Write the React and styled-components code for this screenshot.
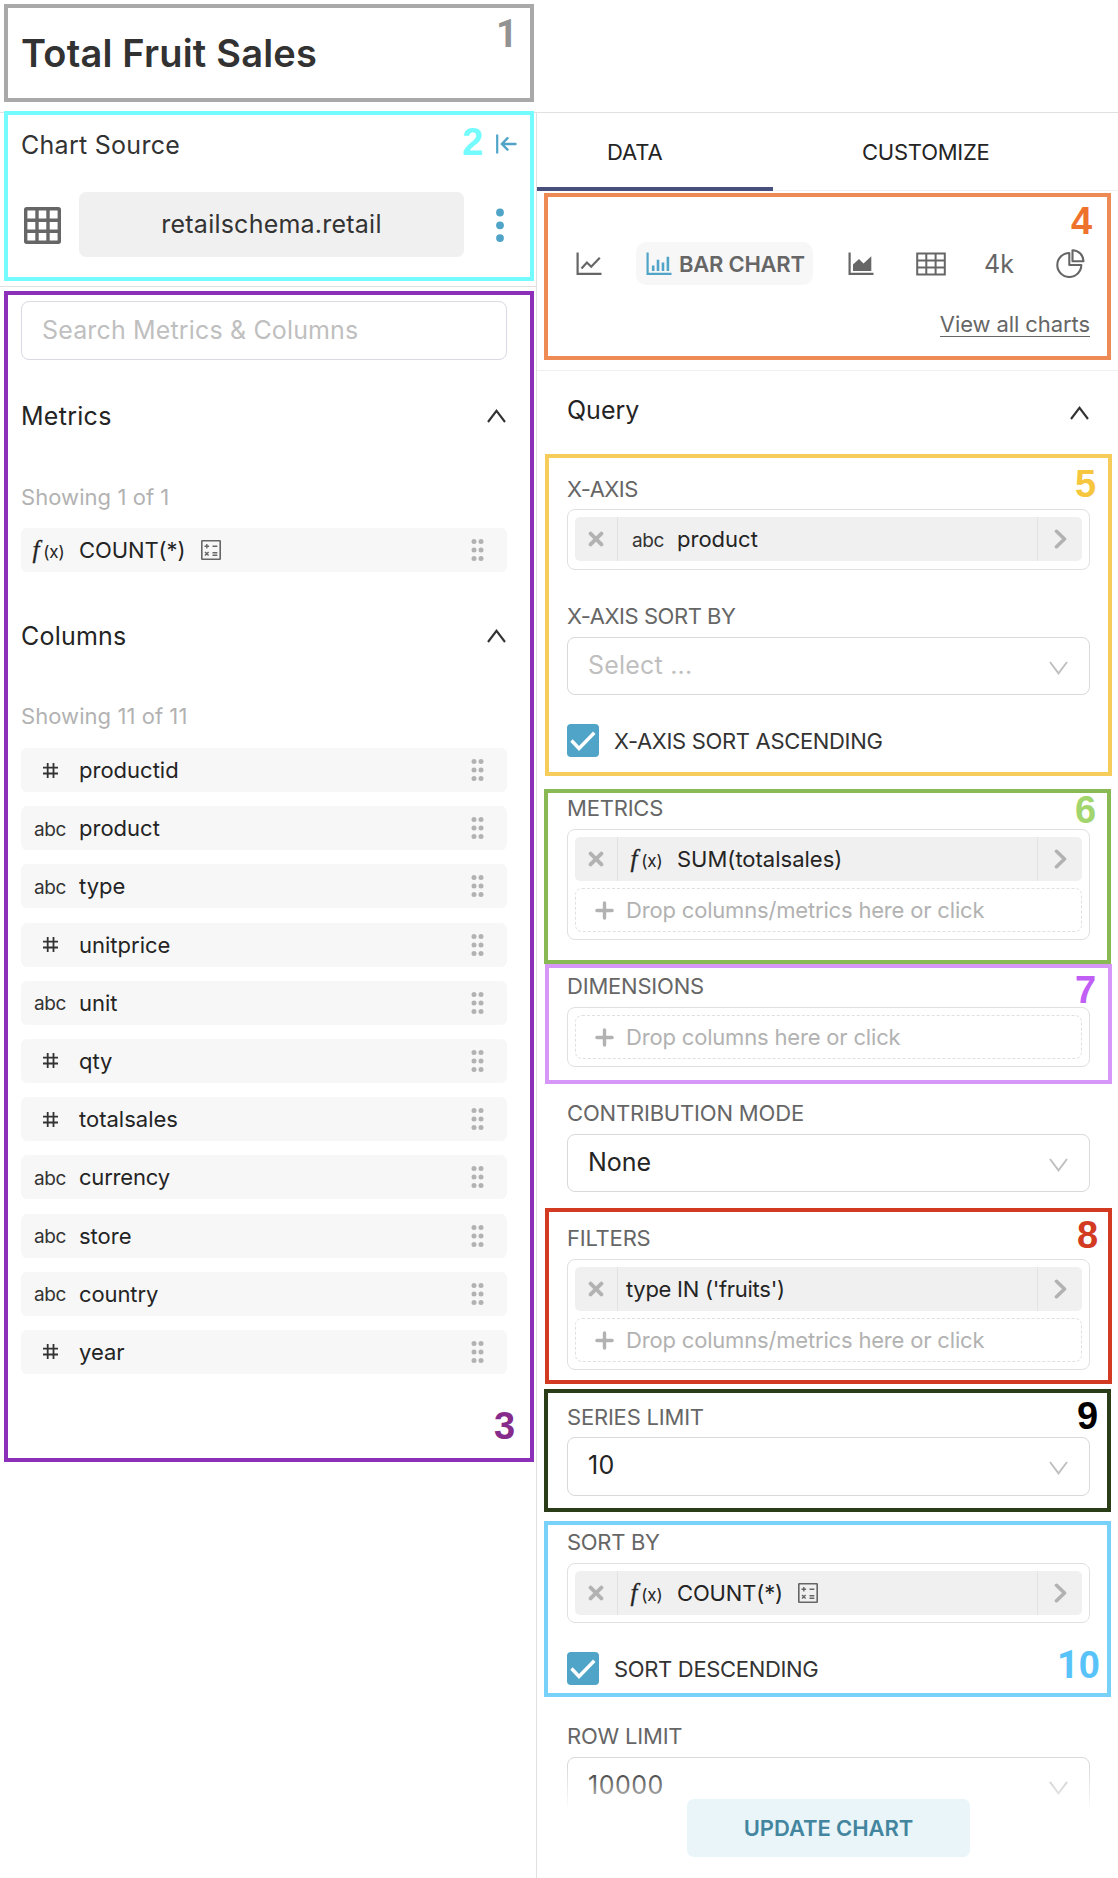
import React from 'react';
import styled, { createGlobalStyle } from 'styled-components';

const GlobalStyle = createGlobalStyle`
  *, *::before, *::after { box-sizing: border-box; }
  body { margin: 0; background: #fff; font-family: Inter, "Liberation Sans", sans-serif; color: #242424; }
`;

const Page = styled.div`
  position: relative;
  width: 1118px;
  height: 1878px;
  overflow: hidden;
  display: flex;
  flex-direction: column;
  background: #fff;
`;

const Header = styled.header`
  height: 113px;
  flex: none;
  display: flex;
  align-items: center;
  padding: 0 21px 6px;
  border-bottom: 1px solid #e0e0e0;
`;

const Title = styled.h1`
  margin: 0;
  font-size: 38px;
  font-weight: 600;
  letter-spacing: 0.19px;
  color: #323232;
`;

const Body = styled.div`
  flex: 1;
  min-height: 0;
  display: flex;
`;

const Text = styled.span`
  font-size: ${(p) => p.$size || 22}px;
  font-weight: ${(p) => p.$weight || 400};
  letter-spacing: ${(p) => p.$track || 0}px;
  color: ${(p) => p.$color || 'inherit'};
  white-space: pre;
`;

/* ---------- source panel ---------- */

const SourcePanel = styled.aside`
  width: 537px;
  flex: none;
  border-right: 1px solid #e0e0e0;
`;

const SourceBox = styled.section`
  height: 174px;
  border-bottom: 1px solid #e0e0e0;
`;

const SourceHead = styled.div`
  height: 62px;
  display: flex;
  align-items: center;
  justify-content: space-between;
  padding: 0 19px 0 21px;
  color: #333;
  & > span { padding-top: 2px; }
`;

const SourceRow = styled.div`
  display: flex;
  align-items: center;
  height: 65px;
  margin-top: 17px;
  padding: 0 32px 0 24px;
  & > svg { margin-top: 2px; }
`;

const DatasetButton = styled.div`
  width: 385px;
  height: 65px;
  margin: 0 auto 0 18px;
  display: flex;
  align-items: center;
  justify-content: center;
  padding-bottom: 2px;
  border-radius: 7px;
  background: #f0f0f0;
  color: #333;
`;

const SearchBox = styled.div`
  width: 486px;
  height: 59px;
  margin: 14px 0 0 21px;
  padding: 0 0 2px 20px;
  display: flex;
  align-items: center;
  border: 1px solid #d9d9e3;
  border-radius: 8px;
`;

const GroupHead = styled.div`
  height: 112px;
  margin-top: ${(p) => p.$top}px;
  padding: 0 30px 0 21px;
  display: flex;
  align-items: center;
  justify-content: space-between;
`;

const Count = styled.div`
  height: 49px;
  margin-bottom: 7px;
  padding: 0 0 ${(p) => p.$lift || 0}px 21px;
  display: flex;
  align-items: center;
`;

const Rows = styled.div`
  display: flex;
  flex-direction: column;
  gap: 14.2px;
  padding: 0 29px 0 21px;
`;

const Item = styled.div`
  height: 44px;
  display: flex;
  align-items: center;
  padding-right: 23px;
  border-radius: 6px;
  background: #f7f7f7;
  & > :last-child { margin-left: auto; }
`;

const TypeCell = styled.span`
  width: 58px;
  display: flex;
  justify-content: center;
`;

const AbcMark = styled.span`
  font-size: 19px;
  letter-spacing: -0.4px;
  color: #333;
  position: relative;
  top: 1px;
`;

const FxMark = styled.span`
  display: inline-flex;
  align-items: baseline;
  font-size: 17px;
  letter-spacing: -0.1px;
  color: #242424;
  margin-right: ${(p) => p.$pull || 0}px;
  & > i { font-family: "Liberation Serif", serif; font-size: 25px; line-height: 28px; margin-right: 4px; -webkit-text-stroke: 0.3px #242424; }
`;

const CalcWrap = styled.span`
  display: flex;
  margin-left: ${(p) => p.$gap}px;
`;

/* ---------- control panel ---------- */

const ControlPanel = styled.main`
  position: relative;
  flex: 1;
  min-width: 0;
  overflow: hidden;
`;

const Tabs = styled.nav`
  height: 78px;
  display: flex;
  box-shadow: inset 0 -1px #f0f0f0;
`;

const Tab = styled.div`
  width: ${(p) => p.$width}px;
  padding: ${(p) => (p.$active ? '4px' : '0')} 0 0 ${(p) => p.$inset}px;
  display: flex;
  align-items: center;
  border-bottom: ${(p) => (p.$active ? '4px solid #484f7c' : 'none')};
`;

const VizSection = styled.section`
  height: 180px;
  padding: 51px 28px 0 39px;
  border-bottom: 1px solid #f0f0f0;
  color: #666;
`;

const VizRow = styled.div`
  height: 43px;
  display: grid;
  grid-template-columns: 60px 212px 68px 68px 72px 28px;
  align-items: center;
`;

const VizPill = styled.div`
  width: 177px;
  height: 43px;
  padding-left: 10px;
  gap: 7px;
  display: flex;
  align-items: center;
  border-radius: 10px;
  background: #f7f7f7;
`;

const ViewAllRow = styled.div`
  display: flex;
  justify-content: flex-end;
  margin-top: 25px;
`;

const ViewAll = styled.a`
  height: 27px;
  line-height: 28px;
  font-size: 22px;
  letter-spacing: -0.09px;
  border-bottom: 1px solid #666;
`;

const QueryHead = styled.div`
  height: 78px;
  padding: 0 29px 0 30px;
  display: flex;
  align-items: center;
  justify-content: space-between;
  & > svg { margin-top: 5px; }
`;

const Fields = styled.div`
  display: flex;
  flex-direction: column;
  gap: 25px;
  padding: 18px 28px 0 30px;
`;

const Label = styled.div`
  height: 42px;
  padding-top: ${(p) => p.$drop || 0}px;
  display: flex;
  align-items: center;
  font-size: 22px;
  letter-spacing: ${(p) => p.$track || 0}px;
  color: #666;
`;

const SelectBox = styled.div`
  height: ${(p) => p.$height || 58}px;
  padding: 0 21px 0 20px;
  display: flex;
  align-items: center;
  justify-content: space-between;
  border: 1px solid #d9d9d9;
  border-radius: 8px;
  & > span { padding-bottom: 3px; }
  & > svg { margin-top: 3px; }
`;

const DropBox = styled.div`
  min-height: ${(p) => p.$height || 60}px;
  padding: 7px;
  display: flex;
  flex-direction: column;
  gap: 7px;
  border: 1px solid #e0e0e0;
  border-radius: 8px;
`;

const Chip = styled.div`
  height: 44px;
  display: flex;
  align-items: center;
  border-radius: 5px;
  background: #f0f0f0;
`;

const ChipEdge = styled.span`
  width: ${(p) => p.$width}px;
  height: 44px;
  display: flex;
  align-items: center;
  justify-content: center;
  border: solid #e2e2e2;
  border-width: ${(p) => (p.$end ? '0 0 0 1px' : '0 1px 0 0')};
`;

const ChipBody = styled.span`
  flex: 1;
  display: flex;
  align-items: center;
  padding-left: ${(p) => p.$inset || 9}px;
`;

const ChipMark = styled.span`
  width: 58px;
  display: flex;
  justify-content: center;
`;

const DropHint = styled.div`
  height: 44px;
  padding-left: 19px;
  gap: 12px;
  display: flex;
  align-items: center;
  border: 1px dashed #e0e0e0;
  border-radius: 7px;
  color: #b2b2b2;
`;

const CheckRow = styled.div`
  height: 33px;
  margin: 4px 0 5px;
  gap: 15px;
  display: flex;
  align-items: center;
`;

const Check = styled.span`
  width: 32px;
  height: 33px;
  display: flex;
  align-items: center;
  justify-content: center;
  border-radius: 4px;
  background: #50a4c8;
`;

const Footer = styled.div`
  position: absolute;
  left: 0;
  right: 0;
  bottom: 0;
  height: 113px;
  padding: 34px 0 0 150px;
  background: linear-gradient(rgba(255, 255, 255, 0), rgba(255, 255, 255, 0.5) 26px, #fff 45px);
`;

const UpdateButton = styled.div`
  width: 283px;
  height: 58px;
  display: flex;
  align-items: center;
  justify-content: center;
  border-radius: 7px;
  background: #e9f5f8;
  color: #43859f;
`;

/* ---------- callouts drawn over the panels ---------- */

const Frame = styled.div`
  position: absolute;
  left: ${(p) => p.$x}px;
  top: ${(p) => p.$y}px;
  width: ${(p) => p.$w}px;
  height: ${(p) => p.$h}px;
  border: 4px solid ${(p) => p.$color};
  pointer-events: none;
`;

const FrameNumber = styled.div`
  position: absolute;
  left: ${(p) => p.$x}px;
  top: ${(p) => p.$base - 33}px;
  font: 700 38px/40px "Liberation Sans", sans-serif;
  color: ${(p) => p.$color};
`;

const One = styled.span`
  font-family: Roboto, sans-serif;
  line-height: 1;
`;

/* ---------- icons ---------- */

const CollapseIcon = () => (
  <svg width="21" height="20" viewBox="0 0 21 20" fill="none" stroke="#50a4c8" strokeWidth="2">
    <path d="M1.2 0.5v19" strokeWidth="2.2" />
    <path d="M6 10h13.5M11.5 4.2L5.8 10l5.700 5.600" strokeWidth="2.4" strokeLinecap="round" strokeLinejoin="round" />
  </svg>
);

const GridIcon = () => (
  <svg width="37" height="37" viewBox="0 0 37 37" fill="none" stroke="#666" strokeWidth="3.400">
    <rect x="1.700" y="1.700" width="33.600" height="33.600" rx="1" />
    <path d="M13 1v35M24 1v35M1 13.200h35M1 24.300h35" />
  </svg>
);

const MoreIcon = () => (
  <svg width="8" height="35" viewBox="0 0 8 35" fill="#50a4c8">
    <circle cx="4" cy="4.500" r="3.900" /><circle cx="4" cy="17.300" r="3.900" /><circle cx="4" cy="30.100" r="3.900" />
  </svg>
);

const Caret = ({ down }) => (
  <svg width="19" height="14" viewBox="0 0 19 14" fill="none" stroke={down ? '#bfbfbf' : '#333'} strokeWidth={down ? 1.9 : 2.1}>
    <path d={down ? 'M1 1l8.500 11.300L18 1' : 'M1 13l8.500-11.200L18 13'} />
  </svg>
);

const DragIcon = () => (
  <svg width="13" height="24" viewBox="0 0 13 24" fill="#b2b2b2">
    {[3.5, 12, 20.5].map((y) => (
      <g key={y}><circle cx="3" cy={y} r="2.500" /><circle cx="10" cy={y} r="2.500" /></g>
    ))}
  </svg>
);

const HashIcon = () => (
  <svg width="15" height="15" viewBox="0 0 15 15" fill="none" stroke="#333" strokeWidth="1.800">
    <path d="M4.700 0v15M10.500 0v15M0 4.600h15M0 10.500h15" />
  </svg>
);

const CalcIcon = ({ gap = 16 }) => (
  <CalcWrap $gap={gap}>
    <svg width="20" height="20" viewBox="0 0 20 20" fill="none" stroke="#666" strokeWidth="1.400">
      <rect x="0.800" y="0.800" width="18.400" height="18.400" rx="0.500" strokeWidth="1.600" />
      <path d="M3.500 6.200h4.600M5.800 3.900v4.600M11.500 6.200h4.800M4 12l3.600 3.600M7.600 12L4 15.600M11.500 12.700h4.800M11.500 15.300h4.800" />
    </svg>
  </CalcWrap>
);

const LineIcon = () => (
  <svg width="26" height="24" viewBox="0 0 26 24" fill="none" stroke="#666" strokeWidth="2.200">
    <path d="M1.600 0.500v21.400H25.500" />
    <path d="M5.500 16.500l5.400-6 4.300 4.300 8.600-9" />
  </svg>
);

const BarIcon = () => (
  <svg width="26" height="24" viewBox="0 0 26 24" fill="none" stroke="#50a4c8" strokeWidth="2.200">
    <path d="M1.600 0.500v21.400H25.500" />
    <path d="M7.200 19v-5.500M12 19V7.700M17 19v-8.500M21.900 19V4.800" strokeWidth="2.600" />
  </svg>
);

const AreaIcon = () => (
  <svg width="26" height="24" viewBox="0 0 26 24">
    <path d="M1.600 0.500v21.400H25.500" fill="none" stroke="#666" strokeWidth="2.200" />
    <path d="M5 19v-6.500L11 7l4.500 4.500 7.800-7.200V19z" fill="#666" />
  </svg>
);

const TableIcon = () => (
  <svg width="30" height="24" viewBox="0 0 30 24" fill="none" stroke="#666" strokeWidth="2">
    <path d="M1.200 1.400h27.600v21.200H1.200zM10.300 1v22M19.600 1v22M1 8.400h28M1 15.500h28" />
  </svg>
);

const PieIcon = () => (
  <svg width="29" height="29" viewBox="0 0 29 29" fill="none" stroke="#666" strokeWidth="2.100" strokeLinejoin="round">
    <path d="M13.300 4a12 12 0 1 0 12 12h-12z" />
    <path d="M16.500 1.200a11 11 0 0 1 11 11h-11z" />
  </svg>
);

const CloseIcon = () => (
  <svg width="16" height="16" viewBox="0 0 16 16" fill="none" stroke="#b2b2b2" strokeWidth="3.800" strokeLinecap="round">
    <path d="M2.600 2.600l10.800 10.800M13.400 2.600L2.600 13.400" />
  </svg>
);

const NextIcon = () => (
  <svg width="13" height="20" viewBox="0 0 13 20" fill="none" stroke="#b2b2b2" strokeWidth="3.600" strokeLinecap="round" strokeLinejoin="round">
    <path d="M2.500 2.300L10.500 10l-8 7.700" />
  </svg>
);

const PlusIcon = () => (
  <svg width="19" height="19" viewBox="0 0 19 19" fill="none" stroke="#b2b2b2" strokeWidth="3.400" strokeLinecap="round">
    <path d="M9.500 1.900v15.200M1.900 9.500h15.200" />
  </svg>
);

const TickIcon = () => (
  <svg width="26" height="20" viewBox="0 0 26 20" fill="none" stroke="#fff" strokeWidth="3.400">
    <path d="M1.500 9.500l7.500 8L24.300 1.700" />
  </svg>
);

/* ---------- pieces ---------- */

const Fx = ({ pull }) => <FxMark $pull={pull}><i>f</i>(x)</FxMark>;

const MetricChip = ({ mark, children, track, calc }) => (
  <Chip>
    <ChipEdge $width={43}><CloseIcon /></ChipEdge>
    <ChipBody $inset={mark ? 1 : 8}>
      {mark && <ChipMark>{mark}</ChipMark>}
      <Text $track={track}>{children}</Text>
      {calc && <CalcIcon gap={15} />}
    </ChipBody>
    <ChipEdge $width={45} $end><NextIcon /></ChipEdge>
  </Chip>
);

const Hint = ({ children }) => (
  <DropHint><PlusIcon /><Text $track={-0.18}>{children}</Text></DropHint>
);

const Field = ({ label, track, drop, children }) => (
  <div><Label $track={track} $drop={drop}>{label}</Label>{children}</div>
);

const Select = ({ children, track, color, height }) => (
  <SelectBox $height={height}>
    <Text $size={25} $track={track} $color={color}>{children}</Text>
    <Caret down />
  </SelectBox>
);

const columns = [
  ['#', 'productid', 0], ['abc', 'product', 0], ['abc', 'type', 0], ['#', 'unitprice', 0],
  ['abc', 'unit', 0], ['#', 'qty', 0], ['#', 'totalsales', 0], ['abc', 'currency', -0.2],
  ['abc', 'store', 0], ['abc', 'country', -0.1], ['#', 'year', 0],
];

const callouts = [
  { n: 1, x: 4, y: 4, w: 530, h: 98, color: '#a9a9a9', ink: '#929292', nx: 496, base: 47 },
  { n: 2, x: 4, y: 111, w: 530, h: 170, color: '#73fbfd', nx: 462, base: 155 },
  { n: 3, x: 4, y: 291, w: 530, h: 1171, color: '#8d30b9', ink: '#862a8c', nx: 494, base: 1439 },
  { n: 4, x: 544, y: 193, w: 567, h: 167, color: '#ee8b54', ink: '#ee722c', nx: 1071, base: 234 },
  { n: 5, x: 545, y: 454, w: 567, h: 322, color: '#f6cc5a', ink: '#f6c73e', nx: 1075, base: 497 },
  { n: 6, x: 544, y: 789, w: 567, h: 175, color: '#89b955', ink: '#a2d56d', nx: 1075, base: 823 },
  { n: 7, x: 545, y: 964, w: 567, h: 120, color: '#d797f9', ink: '#c05ef5', nx: 1075, base: 1003 },
  { n: 8, x: 545, y: 1208, w: 567, h: 176, color: '#d23a21', nx: 1077, base: 1248 },
  { n: 9, x: 544, y: 1389, w: 567, h: 123, color: '#2b3c19', ink: '#000', nx: 1077, base: 1429 },
  { n: 10, x: 544, y: 1521, w: 567, h: 176, color: '#78d1f9', ink: '#58c3f9', nx: 1057, base: 1678 },
];

export default function App() {
  return (
    <Page>
      <GlobalStyle />
      <Header><Title>Total Fruit Sales</Title></Header>
      <Body>
        <SourcePanel>
          <SourceBox>
            <SourceHead>
              <Text $size={25} $track={0.28}>Chart Source</Text>
              <CollapseIcon />
            </SourceHead>
            <SourceRow>
              <GridIcon />
              <DatasetButton><Text $size={25} $track={0.23}>retailschema.retail</Text></DatasetButton>
              <MoreIcon />
            </SourceRow>
          </SourceBox>
          <SearchBox><Text $size={25} $track={0.15} $color="#bfbfbf">Search Metrics &amp; Columns</Text></SearchBox>
          <GroupHead $top={0}><Text $size={25} $track={0.28}>Metrics</Text><Caret /></GroupHead>
          <Count><Text $track={0.06} $color="#b2b2b2">Showing 1 of 1</Text></Count>
          <Rows>
            <Item>
              <TypeCell><Fx pull={3} /></TypeCell>
              <Text $track={-0.09}>COUNT(*)</Text>
              <CalcIcon />
              <DragIcon />
            </Item>
          </Rows>
          <GroupHead $top={8}><Text $size={25} $track={0.2}>Columns</Text><Caret /></GroupHead>
          <Count $lift={2}><Text $track={0.06} $color="#b2b2b2">Showing 11 of 11</Text></Count>
          <Rows>
            {columns.map(([type, name, track]) => (
              <Item key={name}>
                <TypeCell>{type === '#' ? <HashIcon /> : <AbcMark>abc</AbcMark>}</TypeCell>
                <Text $track={track}>{name}</Text>
                <DragIcon />
              </Item>
            ))}
          </Rows>
        </SourcePanel>

        <ControlPanel>
          <Tabs>
            <Tab $active $width={236} $inset={70}><Text $track={-0.13}>DATA</Text></Tab>
            <Tab $width={345} $inset={89}><Text $track={-0.24}>CUSTOMIZE</Text></Tab>
          </Tabs>
          <VizSection>
            <VizRow>
              <LineIcon />
              <VizPill><BarIcon /><Text $weight={600} $track={-0.24}>BAR CHART</Text></VizPill>
              <AreaIcon />
              <TableIcon />
              <Text $size={25}>4k</Text>
              <PieIcon />
            </VizRow>
            <ViewAllRow><ViewAll>View all charts</ViewAll></ViewAllRow>
          </VizSection>
          <QueryHead><Text $size={25}>Query</Text><Caret /></QueryHead>
          <Fields>
            <Field label="X-AXIS" track={-0.5} drop={2}>
              <DropBox $height={61}><MetricChip mark={<AbcMark>abc</AbcMark>}>product</MetricChip></DropBox>
            </Field>
            <Field label="X-AXIS SORT BY" track={-0.45}>
              <Select track={0.2} color="#bfbfbf">Select ...</Select>
            </Field>
            <CheckRow><Check><TickIcon /></Check><Text $track={-0.33} $color="#333">X-AXIS SORT ASCENDING</Text></CheckRow>
            <Field label="METRICS" track={-0.2}>
              <DropBox>
                <MetricChip mark={<Fx pull={3} />}>SUM(totalsales)</MetricChip>
                <Hint>Drop columns/metrics here or click</Hint>
              </DropBox>
            </Field>
            <Field label="DIMENSIONS" track={-0.2}>
              <DropBox><Hint>Drop columns here or click</Hint></DropBox>
            </Field>
            <Field label="CONTRIBUTION MODE" track={-0.18}><Select>None</Select></Field>
            <Field label="FILTERS" track={-0.2}>
              <DropBox>
                <MetricChip track={-0.28}>type IN ('fruits')</MetricChip>
                <Hint>Drop columns/metrics here or click</Hint>
              </DropBox>
            </Field>
            <Field label="SERIES LIMIT" track={-0.2} drop={2}><Select height={59} track={0.4}>10</Select></Field>
            <Field label="SORT BY" track={-0.3}>
              <DropBox><MetricChip mark={<Fx pull={3} />} track={-0.15} calc>COUNT(*)</MetricChip></DropBox>
            </Field>
            <CheckRow><Check><TickIcon /></Check><Text $track={-0.33} $color="#333">SORT DESCENDING</Text></CheckRow>
            <Field label="ROW LIMIT" track={-0.2}><Select height={58} track={0.5}>10000</Select></Field>
          </Fields>
          <Footer>
            <UpdateButton><Text $weight={600} $track={-0.07}>UPDATE CHART</Text></UpdateButton>
          </Footer>
        </ControlPanel>
      </Body>

      {callouts.map((c) => (
        <React.Fragment key={c.n}>
          <Frame $x={c.x} $y={c.y} $w={c.w} $h={c.h} $color={c.color} />
          <FrameNumber $x={c.nx} $base={c.base} $color={c.ink || c.color}>
            {String(c.n).split('').map((d) => (d === '1' ? <One key={d}>{d}</One> : d))}
          </FrameNumber>
        </React.Fragment>
      ))}
    </Page>
  );
}
